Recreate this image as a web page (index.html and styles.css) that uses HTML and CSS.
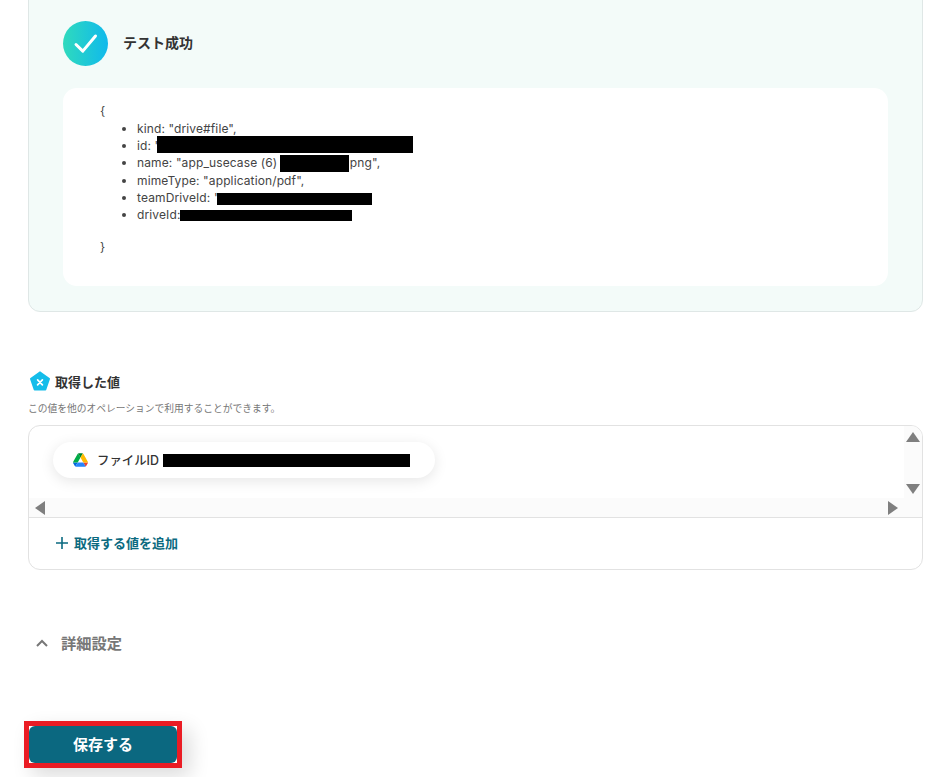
FILE: index.html
```html
<!DOCTYPE html>
<html lang="ja">
<head>
<meta charset="utf-8">
<title>テスト成功</title>
<link rel="stylesheet" href="styles.css">
</head>
<body>
<main class="page">
  <section class="result-panel">
    <header class="result-head">
      <svg class="check-icon" viewBox="0 0 45 45" aria-hidden="true">
        <defs><linearGradient id="checkgrad" x1="0" y1="0" x2="1" y2="0"><stop offset="0" stop-color="#2fdabd"/><stop offset="1" stop-color="#10b9ec"/></linearGradient></defs>
        <circle cx="22.5" cy="22.5" r="22.5" fill="url(#checkgrad)"/>
        <path d="M13 23.5l6.8 6.6L32.5 15" fill="none" stroke="#fff" stroke-width="3" stroke-linecap="round" stroke-linejoin="round"/>
      </svg>
      <h2 class="result-title">テスト成功</h2>
    </header>
    <div class="result-body">
      <p class="brace">{</p>
      <ul class="result-list">
        <li>kind: "drive#file",</li>
        <li>id: "<span class="mask mask-id"></span></li>
        <li>name: "app_usecase (6) <span class="mask mask-name"></span><span class="after-mask">png",</span></li>
        <li>mimeType: "application/pdf",</li>
        <li>teamDriveId: "<span class="mask mask-team"></span></li>
        <li>driveId:<span class="mask mask-drive"></span></li>
      </ul>
      <p class="brace brace-end">}</p>
    </div>
  </section>

  <section class="values">
    <div class="values-head">
      <svg class="pent-icon" viewBox="0 0 20 20" aria-hidden="true">
        <path d="M10 .3l9.5 6.8a1 1 0 0 1 .4 1.1l-3.6 10.6a1 1 0 0 1-.9.7H4.6a1 1 0 0 1-.9-.7L.1 8.2a1 1 0 0 1 .4-1.1z" fill="#14bdea"/>
        <path d="M7.6 8.8l4.8 5M12.4 8.8l-4.8 5" stroke="#fff" stroke-width="1.7" stroke-linecap="round"/>
      </svg>
      <h3 class="values-title">取得した値</h3>
    </div>
    <p class="values-note">この値を他のオペレーションで利用することができます。</p>
    <div class="values-box">
      <div class="scroll-area">
        <div class="scroll-main">
          <div class="pill">
            <svg class="drive-icon" viewBox="0 0 87.3 78" aria-hidden="true">
              <path d="M6.6 66.85l3.85 6.65c.8 1.4 1.95 2.5 3.3 3.3L27.5 53H0c0 1.55.4 3.1 1.2 4.5z" fill="#0066da"/>
              <path d="M43.65 25L29.9 1.2c-1.35.8-2.5 1.9-3.3 3.3L1.2 48.5C.4 49.9 0 51.45 0 53h27.5z" fill="#00ac47"/>
              <path d="M73.55 76.8c1.35-.8 2.5-1.9 3.3-3.3l1.6-2.75 7.65-13.25c.8-1.4 1.2-2.95 1.2-4.5H59.8l5.85 11.5z" fill="#ea4335"/>
              <path d="M43.65 25L57.4 1.2C56.05.4 54.5 0 52.9 0H34.4c-1.6 0-3.15.45-4.5 1.2z" fill="#00832d"/>
              <path d="M59.8 53H27.5L13.75 76.8c1.35.8 2.9 1.2 4.5 1.2h50.8c1.6 0 3.15-.45 4.5-1.2z" fill="#2684fc"/>
              <path d="M73.4 26.5L60.7 4.5c-.8-1.4-1.95-2.5-3.3-3.3L43.65 25 59.8 53h27.45c0-1.55-.4-3.1-1.2-4.5z" fill="#ffba00"/>
            </svg>
            <span class="pill-label">ファイルID</span>
            <span class="pill-mask"></span>
          </div>
        </div>
        <div class="scroll-v">
          <span class="arrow arrow-up"></span>
          <span class="arrow arrow-down"></span>
        </div>
        <div class="scroll-h">
          <span class="arrow arrow-left"></span>
          <span class="arrow arrow-right"></span>
        </div>
      </div>
      <div class="add-row">
        <svg class="plus-icon" viewBox="0 0 12 12" aria-hidden="true"><path d="M6 0v12M0 6h12" stroke="#0b6a80" stroke-width="1.6"/></svg>
        <span class="add-label">取得する値を追加</span>
      </div>
    </div>
  </section>

  <div class="details">
    <svg class="chevron" viewBox="0 0 12 8" aria-hidden="true"><path d="M1 7l5-5 5 5" fill="none" stroke="#777" stroke-width="2"/></svg>
    <span class="details-label">詳細設定</span>
  </div>

  <div class="save-outline"><button class="save-btn" type="button">保存する</button></div>
</main>
</body>
</html>
```
FILE: styles.css
```css
* { box-sizing: border-box; }
html, body { margin: 0; height: 100%; overflow: hidden; background: #fff; }
body { font-family: Inter, "Noto Sans CJK JP", sans-serif; color: #333; }
.page { padding: 0 15px 0 28px; }

.result-panel {
  margin-top: -20px;
  height: 332px;
  padding: 40px 34px 0;
  background: #f3fbf9;
  border: 1px solid #dfe7e6;
  border-radius: 12px;
}
.result-head { display: flex; align-items: center; gap: 15px; height: 45px; }
.check-icon { width: 45px; height: 45px; flex: none; }
.result-title { margin: 0 0 4px; font-size: 14px; font-weight: 600; color: #333; }
.result-body {
  margin-top: 22px;
  height: 198px;
  padding: 14px 37px;
  background: #fff;
  border-radius: 14px;
  font-size: 12px;
  line-height: 17.2px;
  color: #444;
}
.brace { margin: 0; line-height: 18px; }
.brace-end { margin-top: 15.3px; }
.result-list { margin: 0; padding: 0 0 0 37px; }
.result-list li { position: relative; height: 17.2px; letter-spacing: .12px; }
.mask { position: absolute; background: #000; }
.mask-id { left: 20px; top: -1px; width: 256px; height: 17px; }
.mask-name { left: 143px; top: 1px; width: 69px; height: 17px; }
.after-mask { margin-left: 69px; }
.mask-team { left: 80px; top: 4px; width: 155px; height: 12px; }
.mask-drive { left: 43px; top: 4.5px; width: 172px; height: 11px; }

.values { margin-top: 59px; }
.values-head { display: flex; align-items: center; gap: 5px; height: 20px; padding-left: 2px; }
.pent-icon { width: 20px; height: 20px; flex: none; }
.values-title { margin: 0; font-size: 13px; font-weight: 600; color: #333; }
.values-note { margin: 11px 0 0; font-size: 9.75px; line-height: 14px; color: #777; }
.values-box {
  margin-top: 9px;
  height: 145px;
  border: 1px solid #e2e2e2;
  border-radius: 12px;
  overflow: hidden;
}
.scroll-area {
  display: grid;
  grid-template-columns: 1fr 18px;
  grid-template-rows: 72px 19px;
  height: 92px;
  border-bottom: 1px solid #e2e2e2;
}
.scroll-main { padding: 16px 0 0 24px; }
.pill {
  display: flex;
  align-items: center;
  width: 382px;
  height: 36px;
  padding-left: 20px;
  background: #fff;
  border-radius: 18px;
  box-shadow: 0 3px 14px rgba(0, 0, 0, .1);
}
.drive-icon { width: 15px; height: 14px; flex: none; }
.pill-label { margin-left: 9px; font-size: 12.4px; font-weight: 500; color: #333; }
.pill-mask { width: 247px; height: 13px; margin-left: 4px; background: #000; }
.scroll-v {
  display: flex;
  flex-direction: column;
  justify-content: space-between;
  align-items: center;
  padding: 6px 0 4px;
  background: #fbfbfb;
}
.scroll-h {
  grid-column: 1 / 3;
  display: flex;
  justify-content: space-between;
  align-items: center;
  padding: 0 24px 0 6px;
  background: #fbfbfb;
}
.arrow { display: block; width: 0; height: 0; }
.arrow-up { border: 7px solid transparent; border-top: 0; border-bottom: 10px solid #7f7f7f; }
.arrow-down { border: 7px solid transparent; border-bottom: 0; border-top: 10px solid #7f7f7f; }
.arrow-left { border: 7px solid transparent; border-left: 0; border-right: 10px solid #7f7f7f; }
.arrow-right { border: 7px solid transparent; border-right: 0; border-left: 10px solid #7f7f7f; }
.add-row { display: flex; align-items: center; gap: 6px; height: 51px; padding: 0 0 2px 27px; }
.plus-icon { width: 12px; height: 12px; flex: none; }
.add-label { font-size: 13px; font-weight: 600; color: #0b6a80; }

.details { display: flex; align-items: center; gap: 13px; margin-top: 60px; padding-left: 8px; height: 24px; }
.chevron { width: 12px; height: 8px; flex: none; margin-top: 2px; }
.details-label { font-size: 15.25px; font-weight: 600; color: #777; }

.save-outline {
  display: inline-block;
  margin: 67px 0 0 -4px;
  border: 5px solid #ea1c24;
  box-shadow: 8px 8px 20px rgba(0, 0, 0, .14);
}
.save-btn {
  display: block;
  width: 148px;
  height: 37px;
  padding: 0 0 2px;
  border: 0;
  border-radius: 6px;
  background: #0b6880;
  font-family: inherit;
  font-size: 15px;
  font-weight: 700;
  color: #fff;
}
```
